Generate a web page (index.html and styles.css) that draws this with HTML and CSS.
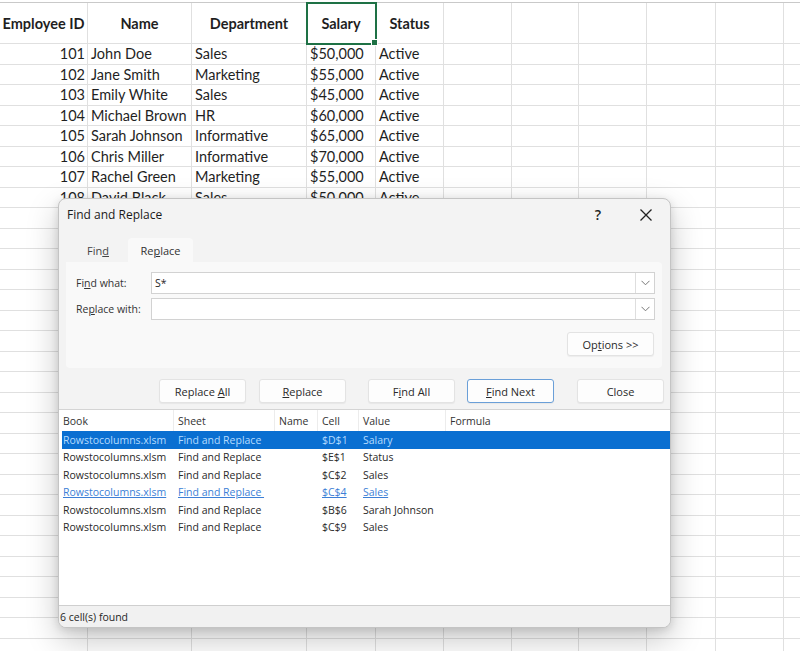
FILE: index.html
```html
<!DOCTYPE html>
<html>
<head>
<meta charset="utf-8">
<link rel="stylesheet" href="styles.css">
</head>
<body>
<div class="viewport">
<div class="sheet">
  <div class="c h">Employee ID</div><div class="c h">Name</div><div class="c h">Department</div><div class="c h sel">Salary<span class="handle"></span></div><div class="c h">Status</div><div class="c"></div><div class="c"></div><div class="c"></div><div class="c"></div><div class="c"></div><div class="c"></div>
  <div class="c r">101</div><div class="c">John Doe</div><div class="c">Sales</div><div class="c">$50,000</div><div class="c">Active</div><div class="c"></div><div class="c"></div><div class="c"></div><div class="c"></div><div class="c"></div><div class="c"></div>
  <div class="c r">102</div><div class="c">Jane Smith</div><div class="c">Marketing</div><div class="c">$55,000</div><div class="c">Active</div><div class="c"></div><div class="c"></div><div class="c"></div><div class="c"></div><div class="c"></div><div class="c"></div>
  <div class="c r">103</div><div class="c">Emily White</div><div class="c">Sales</div><div class="c">$45,000</div><div class="c">Active</div><div class="c"></div><div class="c"></div><div class="c"></div><div class="c"></div><div class="c"></div><div class="c"></div>
  <div class="c r">104</div><div class="c">Michael Brown</div><div class="c">HR</div><div class="c">$60,000</div><div class="c">Active</div><div class="c"></div><div class="c"></div><div class="c"></div><div class="c"></div><div class="c"></div><div class="c"></div>
  <div class="c r">105</div><div class="c">Sarah Johnson</div><div class="c">Informative</div><div class="c">$65,000</div><div class="c">Active</div><div class="c"></div><div class="c"></div><div class="c"></div><div class="c"></div><div class="c"></div><div class="c"></div>
  <div class="c r">106</div><div class="c">Chris Miller</div><div class="c">Informative</div><div class="c">$70,000</div><div class="c">Active</div><div class="c"></div><div class="c"></div><div class="c"></div><div class="c"></div><div class="c"></div><div class="c"></div>
  <div class="c r">107</div><div class="c">Rachel Green</div><div class="c">Marketing</div><div class="c">$55,000</div><div class="c">Active</div><div class="c"></div><div class="c"></div><div class="c"></div><div class="c"></div><div class="c"></div><div class="c"></div>
  <div class="c r">108</div><div class="c">David Black</div><div class="c">Sales</div><div class="c">$50,000</div><div class="c">Active</div><div class="c"></div><div class="c"></div><div class="c"></div><div class="c"></div><div class="c"></div><div class="c"></div>
  <div class="c"></div><div class="c"></div><div class="c"></div><div class="c"></div><div class="c"></div><div class="c"></div><div class="c"></div><div class="c"></div><div class="c"></div><div class="c"></div><div class="c"></div>
  <div class="c"></div><div class="c"></div><div class="c"></div><div class="c"></div><div class="c"></div><div class="c"></div><div class="c"></div><div class="c"></div><div class="c"></div><div class="c"></div><div class="c"></div>
  <div class="c"></div><div class="c"></div><div class="c"></div><div class="c"></div><div class="c"></div><div class="c"></div><div class="c"></div><div class="c"></div><div class="c"></div><div class="c"></div><div class="c"></div>
  <div class="c"></div><div class="c"></div><div class="c"></div><div class="c"></div><div class="c"></div><div class="c"></div><div class="c"></div><div class="c"></div><div class="c"></div><div class="c"></div><div class="c"></div>
  <div class="c"></div><div class="c"></div><div class="c"></div><div class="c"></div><div class="c"></div><div class="c"></div><div class="c"></div><div class="c"></div><div class="c"></div><div class="c"></div><div class="c"></div>
  <div class="c"></div><div class="c"></div><div class="c"></div><div class="c"></div><div class="c"></div><div class="c"></div><div class="c"></div><div class="c"></div><div class="c"></div><div class="c"></div><div class="c"></div>
  <div class="c"></div><div class="c"></div><div class="c"></div><div class="c"></div><div class="c"></div><div class="c"></div><div class="c"></div><div class="c"></div><div class="c"></div><div class="c"></div><div class="c"></div>
  <div class="c"></div><div class="c"></div><div class="c"></div><div class="c"></div><div class="c"></div><div class="c"></div><div class="c"></div><div class="c"></div><div class="c"></div><div class="c"></div><div class="c"></div>
  <div class="c"></div><div class="c"></div><div class="c"></div><div class="c"></div><div class="c"></div><div class="c"></div><div class="c"></div><div class="c"></div><div class="c"></div><div class="c"></div><div class="c"></div>
  <div class="c"></div><div class="c"></div><div class="c"></div><div class="c"></div><div class="c"></div><div class="c"></div><div class="c"></div><div class="c"></div><div class="c"></div><div class="c"></div><div class="c"></div>
  <div class="c"></div><div class="c"></div><div class="c"></div><div class="c"></div><div class="c"></div><div class="c"></div><div class="c"></div><div class="c"></div><div class="c"></div><div class="c"></div><div class="c"></div>
  <div class="c"></div><div class="c"></div><div class="c"></div><div class="c"></div><div class="c"></div><div class="c"></div><div class="c"></div><div class="c"></div><div class="c"></div><div class="c"></div><div class="c"></div>
  <div class="c"></div><div class="c"></div><div class="c"></div><div class="c"></div><div class="c"></div><div class="c"></div><div class="c"></div><div class="c"></div><div class="c"></div><div class="c"></div><div class="c"></div>
  <div class="c"></div><div class="c"></div><div class="c"></div><div class="c"></div><div class="c"></div><div class="c"></div><div class="c"></div><div class="c"></div><div class="c"></div><div class="c"></div><div class="c"></div>
  <div class="c"></div><div class="c"></div><div class="c"></div><div class="c"></div><div class="c"></div><div class="c"></div><div class="c"></div><div class="c"></div><div class="c"></div><div class="c"></div><div class="c"></div>
  <div class="c"></div><div class="c"></div><div class="c"></div><div class="c"></div><div class="c"></div><div class="c"></div><div class="c"></div><div class="c"></div><div class="c"></div><div class="c"></div><div class="c"></div>
  <div class="c"></div><div class="c"></div><div class="c"></div><div class="c"></div><div class="c"></div><div class="c"></div><div class="c"></div><div class="c"></div><div class="c"></div><div class="c"></div><div class="c"></div>
  <div class="c"></div><div class="c"></div><div class="c"></div><div class="c"></div><div class="c"></div><div class="c"></div><div class="c"></div><div class="c"></div><div class="c"></div><div class="c"></div><div class="c"></div>
  <div class="c"></div><div class="c"></div><div class="c"></div><div class="c"></div><div class="c"></div><div class="c"></div><div class="c"></div><div class="c"></div><div class="c"></div><div class="c"></div><div class="c"></div>
  <div class="c"></div><div class="c"></div><div class="c"></div><div class="c"></div><div class="c"></div><div class="c"></div><div class="c"></div><div class="c"></div><div class="c"></div><div class="c"></div><div class="c"></div>
  <div class="c"></div><div class="c"></div><div class="c"></div><div class="c"></div><div class="c"></div><div class="c"></div><div class="c"></div><div class="c"></div><div class="c"></div><div class="c"></div><div class="c"></div>
  <div class="c"></div><div class="c"></div><div class="c"></div><div class="c"></div><div class="c"></div><div class="c"></div><div class="c"></div><div class="c"></div><div class="c"></div><div class="c"></div><div class="c"></div>
</div>
</div>

<div class="dialog">
  <div class="titlebar">
    <span class="title">Find and Replace</span>
    <span class="help">?</span>
    <svg class="close-x" width="12" height="12" viewBox="0 0 12 12"><path d="M0.5 0.5 L11.5 11.5 M11.5 0.5 L0.5 11.5" stroke="#222" stroke-width="1.3" fill="none"/></svg>
  </div>
  <div class="tabs">
    <div class="tab"><span>Fin<u>d</u></span></div>
    <div class="tab active"><span>Re<u>p</u>lace</span></div>
  </div>
  <div class="panel">
    <div class="field">
      <span class="label">Fi<u>n</u>d what:</span>
      <div class="combo"><span class="val">S*</span><span class="arrow"><svg width="9" height="6" viewBox="0 0 9 6"><path d="M0.5 0.8 L4.5 4.8 L8.5 0.8" stroke="#777" stroke-width="1" fill="none"/></svg></span></div>
    </div>
    <div class="field">
      <span class="label">Re<u>p</u>lace with:</span>
      <div class="combo"><span class="val"></span><span class="arrow"><svg width="9" height="6" viewBox="0 0 9 6"><path d="M0.5 0.8 L4.5 4.8 L8.5 0.8" stroke="#777" stroke-width="1" fill="none"/></svg></span></div>
    </div>
    <div class="opts-row"><div class="btn opts"><span>Op<u>t</u>ions &gt;&gt;</span></div></div>
  </div>
  <div class="actions">
    <div class="btn g14"><span>Replace <u>A</u>ll</span></div>
    <div class="btn g22"><span><u>R</u>eplace</span></div>
    <div class="btn g12"><span>F<u>i</u>nd All</span></div>
    <div class="btn focus g24"><span><u>F</u>ind Next</span></div>
    <div class="btn"><span>Close</span></div>
  </div>
  <div class="results">
    <div class="rrow head"><span>Book</span><span>Sheet</span><span>Name</span><span>Cell</span><span>Value</span><span>Formula</span></div>
    <div class="rrow picked"><span>Rowstocolumns.xlsm</span><span>Find and Replace</span><span></span><span>$D$1</span><span>Salary</span><span></span></div>
    <div class="rrow"><span>Rowstocolumns.xlsm</span><span>Find and Replace</span><span></span><span>$E$1</span><span>Status</span><span></span></div>
    <div class="rrow"><span>Rowstocolumns.xlsm</span><span>Find and Replace</span><span></span><span>$C$2</span><span>Sales</span><span></span></div>
    <div class="rrow link"><span>Rowstocolumns.xlsm</span><span>Find and Replace&nbsp;</span><span></span><span>$C$4</span><span>Sales</span><span></span></div>
    <div class="rrow"><span>Rowstocolumns.xlsm</span><span>Find and Replace</span><span></span><span>$B$6</span><span>Sarah Johnson</span><span></span></div>
    <div class="rrow"><span>Rowstocolumns.xlsm</span><span>Find and Replace</span><span></span><span>$C$9</span><span>Sales</span><span></span></div>
  </div>
  <div class="status">6 cell(s) found</div>
</div>
</body>
</html>
```

FILE: styles.css
```css
html, body {
  margin: 0;
  padding: 0;
  background: #ffffff;
  overflow: hidden;
  width: 800px;
  height: 651px;
}

body {
  position: relative;
  font-family: "Lato", "Liberation Sans", sans-serif;
}

.viewport {
  width: 800px;
  height: 651px;
  overflow: hidden;
}

.sheet {
  margin-top: 2px;
  display: grid;
  grid-template-columns: 88px 104px 115px 69px 68px 68px 67px 68px 69px 68px 16px;
  grid-template-rows: 41px repeat(30, 20.5px);
  border-top: 1px solid #c9c9c9;
  width: 800px;
}

.c {
  box-sizing: border-box;
  border-right: 1px solid #e0e0e0;
  border-bottom: 1px solid #e0e0e0;
  font-size: 14.5px;
  color: #1f1f1f;
  padding: 0 3px;
  display: flex;
  align-items: center;
  white-space: nowrap;
  overflow: hidden;
}

.c:nth-child(11n) {
  border-right: none;
}

.c.h {
  font-weight: bold;
  justify-content: center;
  font-size: 14.5px;
}

.c.r {
  justify-content: flex-end;
  padding-right: 2px;
}

.c.sel {
  position: relative;
  overflow: visible;
  outline: 2px solid #1e7145;
  outline-offset: -1px;
}

.handle {
  position: absolute;
  right: -3px;
  bottom: -3px;
  width: 5px;
  height: 5px;
  background: #1e7145;
  border: 1px solid #fff;
}

/* Dialog */
.dialog {
  position: absolute;
  left: 58px;
  top: 198px;
  width: 613px;
  box-sizing: border-box;
  border: 1px solid #c4c4c4;
  border-radius: 8px;
  background: #f3f3f3;
  box-shadow: 0 12px 32px rgba(0, 0, 0, 0.22), 0 2px 8px rgba(0, 0, 0, 0.12);
  overflow: hidden;
  display: flex;
  flex-direction: column;
  font-family: "Open Sans", "Noto Sans", sans-serif;
  font-size: 11px;
  color: #262626;
}

.titlebar {
  height: 31px;
  display: flex;
  align-items: center;
  padding-left: 8px;
}

.title {
  font-size: 12px;
  color: #1a1a1a;
  flex: 1;
}

.help {
  font-size: 14px;
  font-weight: 600;
  color: #222;
  margin-right: 39px;
}

.close-x {
  margin-right: 18px;
}

.tabs {
  margin-top: 8px;
  display: flex;
  padding-left: 19px;
  height: 24px;
}

.tab {
  display: flex;
  align-items: center;
  justify-content: center;
  width: 40px;
  color: #444;
  font-size: 11px;
}

.tab.active {
  width: 65px;
  margin-left: 10px;
  background: #f9f9f9;
  border-radius: 4px 4px 0 0;
  color: #333;
}

.panel {
  margin: 0 8px 0 7px;
  height: 106px;
  box-sizing: border-box;
  background: #f9f9f9;
  border-radius: 0 4px 4px 4px;
  padding: 10px 7px 0 10px;
  display: flex;
  flex-direction: column;
}

.field {
  display: flex;
  align-items: center;
  margin-bottom: 4px;
}

.label {
  width: 75px;
  font-size: 10.5px;
  color: #333;
}

.combo {
  flex: 1;
  height: 22px;
  box-sizing: border-box;
  background: #fff;
  border: 1px solid #d2d2d2;
  display: flex;
  align-items: center;
}

.val {
  flex: 1;
  padding-left: 3px;
  font-size: 10.5px;
}

.arrow {
  width: 18px;
  height: 100%;
  border-left: 1px solid #dedede;
  display: flex;
  align-items: center;
  justify-content: center;
}

.opts-row {
  display: flex;
  justify-content: flex-end;
  margin-top: 8px;
  padding-right: 1px;
}

.btn {
  width: 87px;
  height: 24px;
  box-sizing: border-box;
  background: #fdfdfd;
  border: 1px solid #e3e3e3;
  border-radius: 3px;
  display: flex;
  align-items: center;
  justify-content: center;
  font-size: 11px;
  color: #2a2a2a;
  box-shadow: 0 1px 1px rgba(0, 0, 0, 0.05);
}

.btn.focus {
  border: 1px solid #6a9fd8;
}

.actions {
  display: flex;
  padding-left: 100px;
  margin-top: 11px;
  height: 24px;
}

.g14 { margin-right: 13px; }
.g22 { margin-right: 22px; }
.g12 { margin-right: 12px; }
.g24 { margin-right: 23px; }

.results {
  margin-top: 6px;
  height: 197px;
  box-sizing: border-box;
  background: #fff;
  border-top: 1px solid #d4d4d4;
  border-bottom: 1px solid #cfcfcf;
  padding-left: 3px;
}

.rrow {
  display: grid;
  grid-template-columns: 112px 101px 43px 41px 87px 1fr;
  height: 17.5px;
  align-items: center;
  font-size: 10.5px;
  color: #2a2a2a;
  white-space: nowrap;
}

.rrow span {
  padding-left: 4px;
  overflow: hidden;
}

.rrow span:first-child {
  padding-left: 1px;
}

.rrow.head {
  height: 21px;
  align-items: stretch;
  color: #333;
}

.rrow.head span {
  display: flex;
  align-items: center;
  border-right: 1px solid #ececec;
}

.rrow.head span:last-child {
  border-right: none;
}

.rrow.picked {
  background: #0a6fd1;
  color: #b4dbff;
}

.rrow.link {
  color: #3d7fd6;
}

.rrow.link span {
  text-decoration: underline;
}

.status {
  height: 21px;
  display: flex;
  align-items: center;
  padding-left: 1px;
  font-size: 10.5px;
  color: #262626;
  background: #f1f1f1;
}
```
